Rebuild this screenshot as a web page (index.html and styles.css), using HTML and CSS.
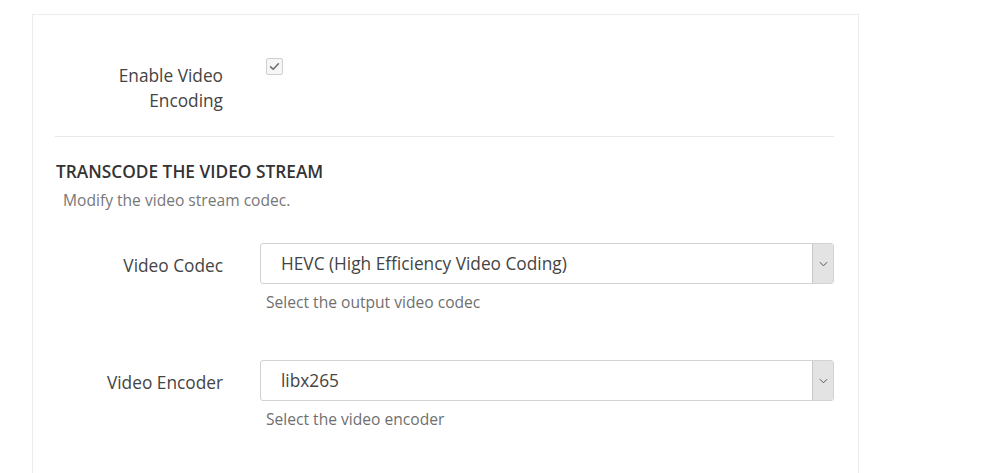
FILE: index.html
```html
<!DOCTYPE html>
<html lang="en">
<head>
<meta charset="utf-8">
<title>Video Encoding</title>
<link rel="stylesheet" href="styles.css">
</head>
<body>
<main class="card">
  <div class="row row-check">
    <label class="row-label">Enable Video Encoding</label>
    <div class="row-control">
      <span class="checkbox" role="checkbox" aria-checked="true">
        <svg viewBox="0 0 16 16" width="13" height="13"><path d="M3.2 8.4 L6.4 11.4 L12.8 4.6" fill="none" stroke="#707070" stroke-width="2" stroke-linecap="round" stroke-linejoin="round"/></svg>
      </span>
    </div>
  </div>

  <hr class="divider">

  <section class="section">
    <h2 class="section-title">TRANSCODE THE VIDEO STREAM</h2>
    <p class="section-desc">Modify the video stream codec.</p>

    <div class="row row-field">
      <label class="row-label">Video Codec</label>
      <div class="row-control">
        <div class="select">
          <span class="select-value">HEVC (High Efficiency Video Coding)</span>
          <span class="select-arrow">
            <svg viewBox="0 0 10 6" width="9" height="6"><path d="M1 1 L5 5 L9 1" fill="none" stroke="#555" stroke-width="1.1"/></svg>
          </span>
        </div>
        <p class="help">Select the output video codec</p>
      </div>
    </div>

    <div class="row row-field">
      <label class="row-label">Video Encoder</label>
      <div class="row-control">
        <div class="select">
          <span class="select-value">libx265</span>
          <span class="select-arrow">
            <svg viewBox="0 0 10 6" width="9" height="6"><path d="M1 1 L5 5 L9 1" fill="none" stroke="#555" stroke-width="1.1"/></svg>
          </span>
        </div>
        <p class="help">Select the video encoder</p>
      </div>
    </div>
  </section>
</main>
</body>
</html>
```

FILE: styles.css
```css
html, body {
  margin: 0;
  padding: 0;
  background: #ffffff;
}

body {
  font-family: "Open Sans", "Noto Sans", sans-serif;
  color: #3a3a3a;
  font-size: 17.3px;
}

.card {
  margin: 14px 0 0 32px;
  width: 827px;
  min-height: 480px;
  box-sizing: border-box;
  border: 1px solid #ececec;
  border-bottom: none;
  padding: 43px 24px 0 22px;
}

.row {
  display: flex;
  align-items: flex-start;
}

.row-label {
  width: 168px;
  flex: none;
  text-align: right;
  line-height: 25px;
  color: #444;
}

.row-control {
  flex: 1;
  margin-left: 37px;
}

.row-check .row-label {
  padding-top: 5px;
}

.row-check .row-control {
  padding-left: 6px;
}

.checkbox {
  display: flex;
  align-items: center;
  justify-content: center;
  width: 15px;
  height: 15px;
  border: 1px solid #cfcfcf;
  border-radius: 2px;
  background: #f6f6f6;
}

.divider {
  border: none;
  border-top: 1px solid #e9e9e9;
  margin: 23px 0 0 0;
  height: 0;
}

.section-title {
  margin: 24px 0 0 1px;
  font-size: 17.3px;
  font-weight: 600;
  line-height: 22px;
  color: #333;
}

.section-desc {
  margin: 7px 0 0 8px;
  font-size: 15.6px;
  line-height: 20px;
  color: #777;
}

.row-field {
  margin-top: 33px;
}

.row-field + .row-field {
  margin-top: 48px;
}

.row-field .row-label {
  padding-top: 10px;
}

.select {
  display: flex;
  height: 41px;
  box-sizing: border-box;
  border: 1px solid #d2d2d2;
  border-radius: 3px;
  background: #fff;
  overflow: hidden;
}

.select-value {
  flex: 1;
  padding-left: 20px;
  line-height: 39px;
  color: #444;
}

.select-arrow {
  width: 20px;
  flex: none;
  display: flex;
  align-items: center;
  justify-content: center;
  background: #e3e3e3;
  border-left: 1px solid #c9c9c9;
}

.help {
  margin: 8px 0 0 6px;
  font-size: 15.6px;
  line-height: 20px;
  color: #6f6f6f;
}
```
